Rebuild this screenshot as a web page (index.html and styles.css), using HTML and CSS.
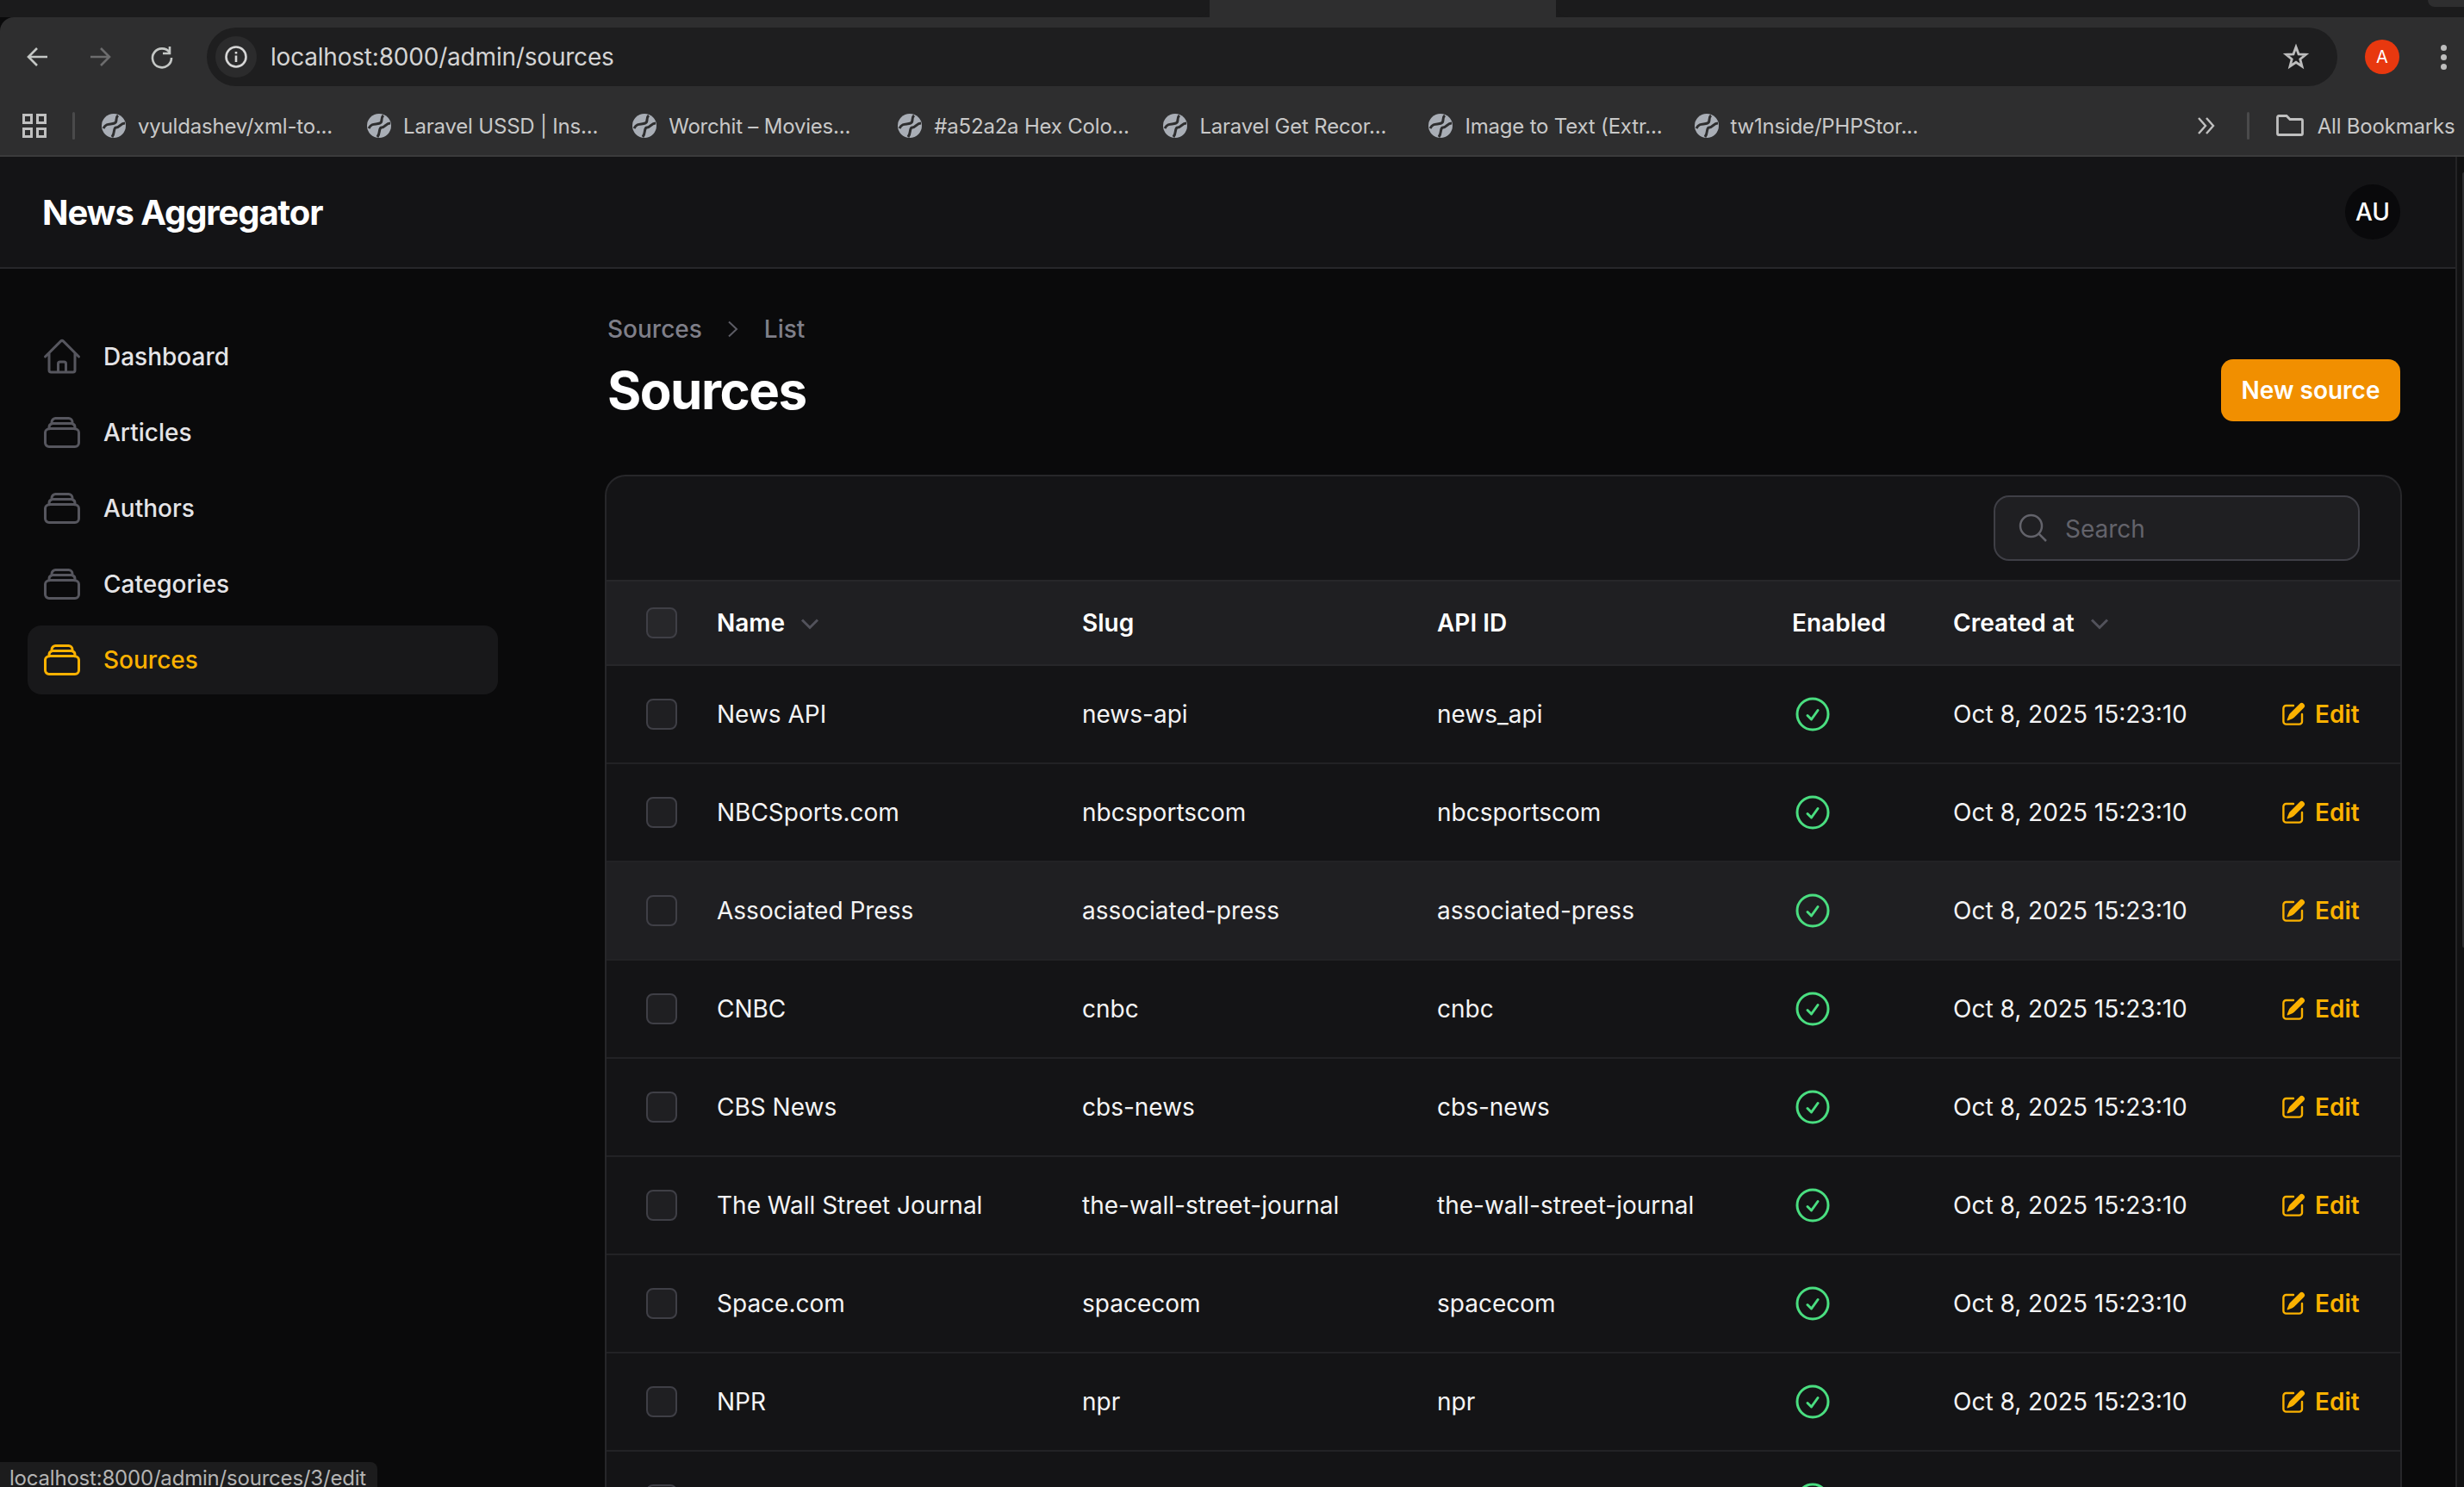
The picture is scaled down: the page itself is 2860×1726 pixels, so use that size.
FILE: index.html
```html
<!DOCTYPE html>
<html lang="en">
<head>
    <meta charset="UTF-8">
    <title>Sources - News Aggregator</title>
    <link rel="stylesheet" href="styles.css">
</head>
<body>

<!-- icons used more than once -->
<svg class="sprite" xmlns="http://www.w3.org/2000/svg">
    <symbol id="i-stack" viewBox="0 0 24 24">
        <path d="M6 6.878V6a2.25 2.25 0 0 1 2.25-2.25h7.5A2.25 2.25 0 0 1 18 6v.878m-12 0c.235-.083.487-.128.75-.128h10.5c.263 0 .515.045.75.128m-12 0A2.25 2.25 0 0 0 4.5 9v.878m13.5-3A2.25 2.25 0 0 1 19.5 9v.878m0 0a2.246 2.246 0 0 0-.75-.128H5.25c-.263 0-.515.045-.75.128m15 0A2.25 2.25 0 0 1 21.75 12v6a2.25 2.25 0 0 1-2.25 2.25h-15A2.25 2.25 0 0 1 2.25 18v-6A2.25 2.25 0 0 1 4.5 9.878"/>
    </symbol>
    <symbol id="i-check" viewBox="0 0 24 24">
        <path d="M9 12.75 11.25 15 15 9.75M21 12a9 9 0 1 1-18 0 9 9 0 0 1 18 0Z"/>
    </symbol>
    <symbol id="i-edit" viewBox="0 0 20 20">
        <path d="m5.433 13.917 1.262-3.155A4 4 0 0 1 7.58 9.42l6.92-6.918a2.121 2.121 0 0 1 3 3l-6.92 6.918c-.383.383-.84.685-1.343.886l-3.154 1.262a.5.5 0 0 1-.65-.65Z"/>
        <path d="M3.5 5.75c0-.69.56-1.25 1.25-1.25H10A.75.75 0 0 0 10 3H4.75A2.75 2.75 0 0 0 2 5.75v9.5A2.75 2.75 0 0 0 4.75 18h9.5A2.75 2.75 0 0 0 17 15.25V10a.75.75 0 0 0-1.5 0v5.25c0 .69-.56 1.25-1.25 1.25h-9.5c-.69 0-1.25-.56-1.25-1.25v-9.5Z"/>
    </symbol>
    <symbol id="i-globe" viewBox="0 0 28 28">
        <circle cx="14" cy="14" r="14" fill="#a9aeb6"/>
        <path d="M19 2C15 5 19 9 15 11 10 13 6 10 2 17" fill="none" stroke="#2e2e2f" stroke-width="3"/>
        <path d="M27 11C22 11 21 16 17 16 13 16 16 22 12 27" fill="none" stroke="#2e2e2f" stroke-width="3"/>
    </symbol>
    <symbol id="i-sort" viewBox="0 0 40 40">
        <path d="M11 16.500 20 25.500 29 16.500"/>
    </symbol>
</svg>

<div class="tabstrip">
    <div class="tab-back"></div>
    <div class="tab-active"></div>
    <div class="tab-back tab-rest"></div>
    <div class="tab-new"></div>
</div>

<div class="chrome">
    <div class="nav-row">
        <button class="nav-btn">
            <svg width="32" height="32" viewBox="0 0 32 32"><path d="M27 16H6M15 6 5 16l10 10"/></svg>
        </button>
        <button class="nav-btn nav-off">
            <svg width="32" height="32" viewBox="0 0 32 32"><path d="M5 16h21M17 6l10 10-10 10"/></svg>
        </button>
        <button class="nav-btn">
            <svg width="32" height="32" viewBox="0 0 32 32"><path d="M25 11A11 11 0 1 0 27 17M25 4v8h-8"/></svg>
        </button>
        <div class="omnibox">
            <span class="site-chip">
                <svg width="28" height="28" viewBox="0 0 28 28"><circle cx="14" cy="14" r="11.500"/><path d="M14 12.500V20M14 8v2.500"/></svg>
            </span>
            <span class="url">localhost:8000/admin/sources</span>
            <svg class="star" width="32" height="32" viewBox="0 0 32 32"><path d="M16 4.500 19 12.800 27.500 13.300 20.800 18.700 23 27 16 22.300 9 27 11.200 18.700 4.500 13.300 13 12.800Z"/></svg>
        </div>
        <span class="profile">A</span>
        <span class="kebab"><i></i><i></i><i></i></span>
    </div>
    <div class="bookmarks">
        <span class="apps"><i></i><i></i><i></i><i></i></span>
        <span class="bm-sep"></span>
        <a class="bm"><svg class="globe"><use href="#i-globe"/></svg>vyuldashev/xml-to...</a>
        <a class="bm"><svg class="globe"><use href="#i-globe"/></svg>Laravel USSD | Ins...</a>
        <a class="bm"><svg class="globe"><use href="#i-globe"/></svg>Worchit – Movies...</a>
        <a class="bm"><svg class="globe"><use href="#i-globe"/></svg>#a52a2a Hex Colo...</a>
        <a class="bm"><svg class="globe"><use href="#i-globe"/></svg>Laravel Get Recor...</a>
        <a class="bm"><svg class="globe"><use href="#i-globe"/></svg>Image to Text (Extr...</a>
        <a class="bm"><svg class="globe"><use href="#i-globe"/></svg>tw1nside/PHPStor...</a>
        <svg class="more" width="24" height="24" viewBox="0 0 24 24"><path d="M3 3l8 9-8 9M12 3l8 9-8 9"/></svg>
        <span class="bm-sep bm-sep-right"></span>
        <svg class="folder" width="32" height="26" viewBox="0 0 32 26"><path d="M1.500 3a1.500 1.500 0 0 1 1.500-1.500h9l4 4h13a1.500 1.500 0 0 1 1.500 1.500v15a1.500 1.500 0 0 1-1.500 1.500H3A1.500 1.500 0 0 1 1.500 22Z"/></svg>
        <span class="bm-all">All Bookmarks</span>
    </div>
</div>

<div class="viewport">
    <div class="app">
        <header class="topbar">
            <div class="brand">News Aggregator</div>
            <div class="avatar">AU</div>
        </header>

        <div class="layout">
            <aside class="sidebar">
                <a class="side-item">
                    <svg class="side-icon" viewBox="0 0 24 24"><path d="m2.250 12 8.954-8.955c.44-.439 1.152-.439 1.591 0L21.750 12M4.500 9.750v10.125c0 .621.504 1.125 1.125 1.125H9.750v-4.875c0-.621.504-1.125 1.125-1.125h2.250c.621 0 1.125.504 1.125 1.125V21h4.125c.621 0 1.125-.504 1.125-1.125V9.750M8.250 21h8.250"/></svg>
                    Dashboard
                </a>
                <a class="side-item"><svg class="side-icon"><use href="#i-stack"/></svg>Articles</a>
                <a class="side-item"><svg class="side-icon"><use href="#i-stack"/></svg>Authors</a>
                <a class="side-item"><svg class="side-icon"><use href="#i-stack"/></svg>Categories</a>
                <a class="side-item active"><svg class="side-icon"><use href="#i-stack"/></svg>Sources</a>
            </aside>

            <main class="content">
                <div class="page-head">
                    <div>
                        <div class="crumbs">
                            <span>Sources</span>
                            <svg width="24" height="24" viewBox="0 0 24 24"><path d="M7 3.500 16 12l-9 8.500"/></svg>
                            <span>List</span>
                        </div>
                        <h1>Sources</h1>
                    </div>
                    <button class="btn-new">New source</button>
                </div>

                <section class="card">
                    <div class="card-tools">
                        <div class="search">
                            <svg width="40" height="40" viewBox="0 0 24 24"><path d="m21 21-5.197-5.197m0 0A7.500 7.500 0 1 0 5.196 5.196a7.500 7.500 0 0 0 10.607 10.607Z"/></svg>
                            <span>Search</span>
                        </div>
                    </div>
                    <table class="data">
                        <colgroup>
                            <col class="c-select"><col class="c-name"><col class="c-slug"><col class="c-api"><col class="c-enabled"><col class="c-created"><col class="c-action">
                        </colgroup>
                        <thead>
                            <tr>
                                <th><span class="box"></span></th>
                                <th><span class="sortable">Name<svg class="sort"><use href="#i-sort"/></svg></span></th>
                                <th>Slug</th>
                                <th>API ID</th>
                                <th>Enabled</th>
                                <th><span class="sortable">Created at<svg class="sort"><use href="#i-sort"/></svg></span></th>
                                <th></th>
                            </tr>
                        </thead>
                        <tbody>
                            <tr>
                                <td><span class="box"></span></td><td>News API</td><td>news-api</td><td>news_api</td>
                                <td><svg class="ok"><use href="#i-check"/></svg></td><td>Oct 8, 2025 15:23:10</td>
                                <td><a class="edit"><svg><use href="#i-edit"/></svg>Edit</a></td>
                            </tr>
                            <tr>
                                <td><span class="box"></span></td><td>NBCSports.com</td><td>nbcsportscom</td><td>nbcsportscom</td>
                                <td><svg class="ok"><use href="#i-check"/></svg></td><td>Oct 8, 2025 15:23:10</td>
                                <td><a class="edit"><svg><use href="#i-edit"/></svg>Edit</a></td>
                            </tr>
                            <tr class="hover">
                                <td><span class="box"></span></td><td>Associated Press</td><td>associated-press</td><td>associated-press</td>
                                <td><svg class="ok"><use href="#i-check"/></svg></td><td>Oct 8, 2025 15:23:10</td>
                                <td><a class="edit"><svg><use href="#i-edit"/></svg>Edit</a></td>
                            </tr>
                            <tr>
                                <td><span class="box"></span></td><td>CNBC</td><td>cnbc</td><td>cnbc</td>
                                <td><svg class="ok"><use href="#i-check"/></svg></td><td>Oct 8, 2025 15:23:10</td>
                                <td><a class="edit"><svg><use href="#i-edit"/></svg>Edit</a></td>
                            </tr>
                            <tr>
                                <td><span class="box"></span></td><td>CBS News</td><td>cbs-news</td><td>cbs-news</td>
                                <td><svg class="ok"><use href="#i-check"/></svg></td><td>Oct 8, 2025 15:23:10</td>
                                <td><a class="edit"><svg><use href="#i-edit"/></svg>Edit</a></td>
                            </tr>
                            <tr>
                                <td><span class="box"></span></td><td>The Wall Street Journal</td><td>the-wall-street-journal</td><td>the-wall-street-journal</td>
                                <td><svg class="ok"><use href="#i-check"/></svg></td><td>Oct 8, 2025 15:23:10</td>
                                <td><a class="edit"><svg><use href="#i-edit"/></svg>Edit</a></td>
                            </tr>
                            <tr>
                                <td><span class="box"></span></td><td>Space.com</td><td>spacecom</td><td>spacecom</td>
                                <td><svg class="ok"><use href="#i-check"/></svg></td><td>Oct 8, 2025 15:23:10</td>
                                <td><a class="edit"><svg><use href="#i-edit"/></svg>Edit</a></td>
                            </tr>
                            <tr>
                                <td><span class="box"></span></td><td>NPR</td><td>npr</td><td>npr</td>
                                <td><svg class="ok"><use href="#i-check"/></svg></td><td>Oct 8, 2025 15:23:10</td>
                                <td><a class="edit"><svg><use href="#i-edit"/></svg>Edit</a></td>
                            </tr>
                            <!-- cut off by the window, text is below the fold -->
                            <tr>
                                <td><span class="box"></span></td><td></td><td></td><td></td>
                                <td><svg class="ok"><use href="#i-check"/></svg></td><td></td><td></td>
                            </tr>
                        </tbody>
                    </table>
                </section>
            </main>
        </div>
    </div>
    <div class="scrollbar"><div class="thumb"></div></div>
</div>

<div class="status">localhost:8000/admin/sources/3/edit</div>

</body>
</html>
```

FILE: styles.css
```css
* { box-sizing: border-box; margin: 0; padding: 0; }
html, body { height: 100%; overflow: hidden; }
body {
    display: flex;
    flex-direction: column;
    background: #0a0a0b;
    color: #fff;
    font-family: "Inter", "Noto Sans", sans-serif;
    font-size: 28px;
}
.sprite { display: none; }
svg { display: block; flex: none; }

/* browser chrome */
.tabstrip { display: flex; flex: none; height: 20px; background: #1b1b1c; position: relative; }
.tab-back { width: 1404px; border-bottom-right-radius: 14px; background: #1b1b1c; }
.tab-active { width: 402px; background: #2e2e2f; }
.tab-rest { flex: 1; width: auto; border-radius: 0 0 0 14px; }
.tab-new {
    position: absolute;
    top: 0;
    right: 0;
    width: 42px;
    height: 8px;
    background: #2e2e2f;
    border-bottom-left-radius: 10px;
}
.chrome {
    flex: none;
    background: #2e2e2f;
    border-bottom: 2px solid #3b3b3c;
    border-top-left-radius: 16px;
}
.nav-row { display: flex; align-items: center; height: 92px; padding: 12px 20px 12px 8px; }
.nav-btn {
    display: flex;
    align-items: center;
    justify-content: center;
    width: 72px;
    height: 68px;
    background: none;
    border: none;
}
.nav-btn svg path { fill: none; stroke: #c4c7c5; stroke-width: 2.6; }
.nav-off svg path { stroke: #6c6c6d; }
.omnibox {
    display: flex;
    align-items: center;
    flex: 1;
    height: 68px;
    margin-left: 16px;
    padding: 0 32px 0 10px;
    background: #1e1e1f;
    border-radius: 34px;
}
.site-chip {
    display: flex;
    align-items: center;
    justify-content: center;
    width: 48px;
    height: 48px;
    border-radius: 50%;
    background: #2b2b2c;
}
.site-chip svg circle, .site-chip svg path { fill: none; stroke: #d6d6d6; stroke-width: 2.6; }
.url { margin-left: 16px; color: #d4d4d4; font-size: 28px; letter-spacing: -.2px; }
.star { margin-left: auto; }
.star path { fill: none; stroke: #bdbdbd; stroke-width: 2.8; }
.profile {
    display: flex;
    align-items: center;
    justify-content: center;
    width: 40px;
    height: 40px;
    margin-left: 32px;
    border-radius: 50%;
    background: #e8380f;
    color: #fff;
    font-size: 20px;
}
.kebab { display: flex; flex-direction: column; gap: 4px; margin-left: 48px; }
.kebab i { width: 7px; height: 7px; border-radius: 50%; background: #bdbdbd; }

.bookmarks { display: flex; align-items: center; height: 68px; padding-left: 26px; color: #c8c8c8; font-size: 24px; letter-spacing: -.2px; }
.apps { display: grid; grid-template-columns: 12px 12px; gap: 4px; }
.apps i { width: 12px; height: 12px; border: 3px solid #c0c0c0; }
.bm-sep { flex: none; width: 3px; height: 32px; margin: 0 31px 0 30px; background: #4a4a4b; border-radius: 2px; }
.bm { display: flex; align-items: center; flex: none; gap: 14px; width: 308.1px; white-space: nowrap; }
.globe { width: 28px; height: 28px; }
.more { margin-left: 274px; }
.more path { fill: none; stroke: #c0c0c0; stroke-width: 2.4; }
.bm-sep-right { margin: 0 31px 0 35px; }
.folder path { fill: none; stroke: #c0c0c0; stroke-width: 2.8; }
.bm-all { flex: none; margin-left: 16px; white-space: nowrap; }

/* page */
.viewport { display: flex; flex: 1; min-height: 0; }
.app { display: flex; flex-direction: column; flex: 1; min-width: 0; }
.scrollbar { flex: none; width: 10px; padding: 18px 0 0 6px; background: #111112; border-left: 2px solid #242426; }
.thumb { width: 4px; height: 900px; border-radius: 2px 0 0 2px; background: #2c2c2e; }

.topbar {
    display: flex;
    align-items: center;
    justify-content: space-between;
    flex: none;
    height: 130px;
    padding: 0 64px 0 49px;
    background: #141416;
    border-bottom: 2px solid #27272a;
}
.brand { font-size: 40px; font-weight: 700; letter-spacing: -1.1px; }
.avatar {
    display: flex;
    align-items: center;
    justify-content: center;
    width: 64px;
    height: 64px;
    border-radius: 50%;
    background: #09090b;
    font-weight: 500;
}

.layout { display: flex; flex: 1; min-height: 0; }
.sidebar { flex: none; width: 638px; padding: 62px 60px 0 32px; }
.side-item {
    display: flex;
    align-items: center;
    gap: 24px;
    height: 80px;
    margin-bottom: 8px;
    padding-left: 16px;
    color: #e4e4e7;
    font-weight: 500;
    border-radius: 16px;
}
.side-icon { width: 48px; height: 48px; fill: none; stroke: #56565e; stroke-width: 1.5; stroke-linecap: round; stroke-linejoin: round; }
.side-item.active { background: #18181a; color: #fbb100; }
.active .side-icon { stroke: #fbb100; }

.content { flex: 1; min-width: 0; padding: 50px 62px 0 64px; }
.page-head { display: flex; align-items: flex-end; justify-content: space-between; margin-bottom: 62px; padding: 0 2px 0 3px; }
.crumbs { display: flex; align-items: center; gap: 24px; height: 40px; margin-bottom: 15px; color: #7f7f89; font-weight: 500; }
.crumbs svg path { fill: none; stroke: #5c5c65; stroke-width: 2; }
h1 { font-size: 60px; line-height: 72px; font-weight: 700; letter-spacing: -1.5px; }
.btn-new {
    width: 208px;
    height: 72px;
    border: none;
    border-radius: 14px;
    background: #f18f00;
    color: #fff;
    font-family: inherit;
    font-size: 28px;
    font-weight: 600;
}

.card { background: #141416; border: 2px solid #27272a; border-bottom: none; border-radius: 24px 24px 0 0; }
.card-tools { display: flex; justify-content: flex-end; height: 120px; padding: 22px 47px 0 0; }
.search {
    display: flex;
    align-items: center;
    gap: 17px;
    width: 425px;
    height: 76px;
    padding-left: 24px;
    background: #1f1f22;
    border: 2px solid #3f3f46;
    border-radius: 18px;
    color: #63636b;
}
.search span { padding-top: 2px; }
.search svg path { fill: none; stroke: #63636b; stroke-width: 1.5; }

.data { width: 100%; table-layout: fixed; border-collapse: separate; border-spacing: 0; }
.c-select { width: 128px; }
.c-name { width: 424px; }
.c-slug { width: 412px; }
.c-api { width: 412px; }
.c-enabled { width: 187px; }
.c-created { width: 382px; }
.data th {
    height: 100px;
    background: #1f1f22;
    border-top: 2px solid #27272a;
    border-bottom: 2px solid #27272a;
    font-size: 28px;
    font-weight: 600;
    text-align: left;
}
.data td { height: 114px; border-bottom: 2px solid #222225; font-weight: 400; color: #f4f4f5; white-space: nowrap; }
.data tr.hover td { background: #1f1f22; }
.box {
    display: block;
    width: 36px;
    height: 36px;
    margin-left: 46px;
    background: #1f1f22;
    border: 2px solid #3f3f46;
    border-radius: 8px;
}
th .box { background: #27272a; }
.sortable { display: flex; align-items: center; gap: 9px; }
.sort { width: 40px; height: 40px; fill: none; stroke: #52525b; stroke-width: 3; }
.ok { width: 48px; height: 48px; fill: none; stroke: #4ade80; stroke-width: 1.5; stroke-linecap: round; stroke-linejoin: round; }
.edit { display: flex; align-items: center; gap: 9px; margin-left: -3px; color: #fbb100; font-weight: 600; }
.edit svg { width: 32px; height: 32px; fill: #fbb100; }

/* link preview at the bottom of the window */
.status {
    position: absolute;
    left: 0;
    bottom: 0;
    height: 29px;
    padding: 4px 13px 0 11px;
    overflow: hidden;
    background: #1c1c1d;
    border-top-right-radius: 8px;
    color: #b4b4b4;
    font-size: 24px;
    letter-spacing: -.2px;
    line-height: 30px;
}
```
